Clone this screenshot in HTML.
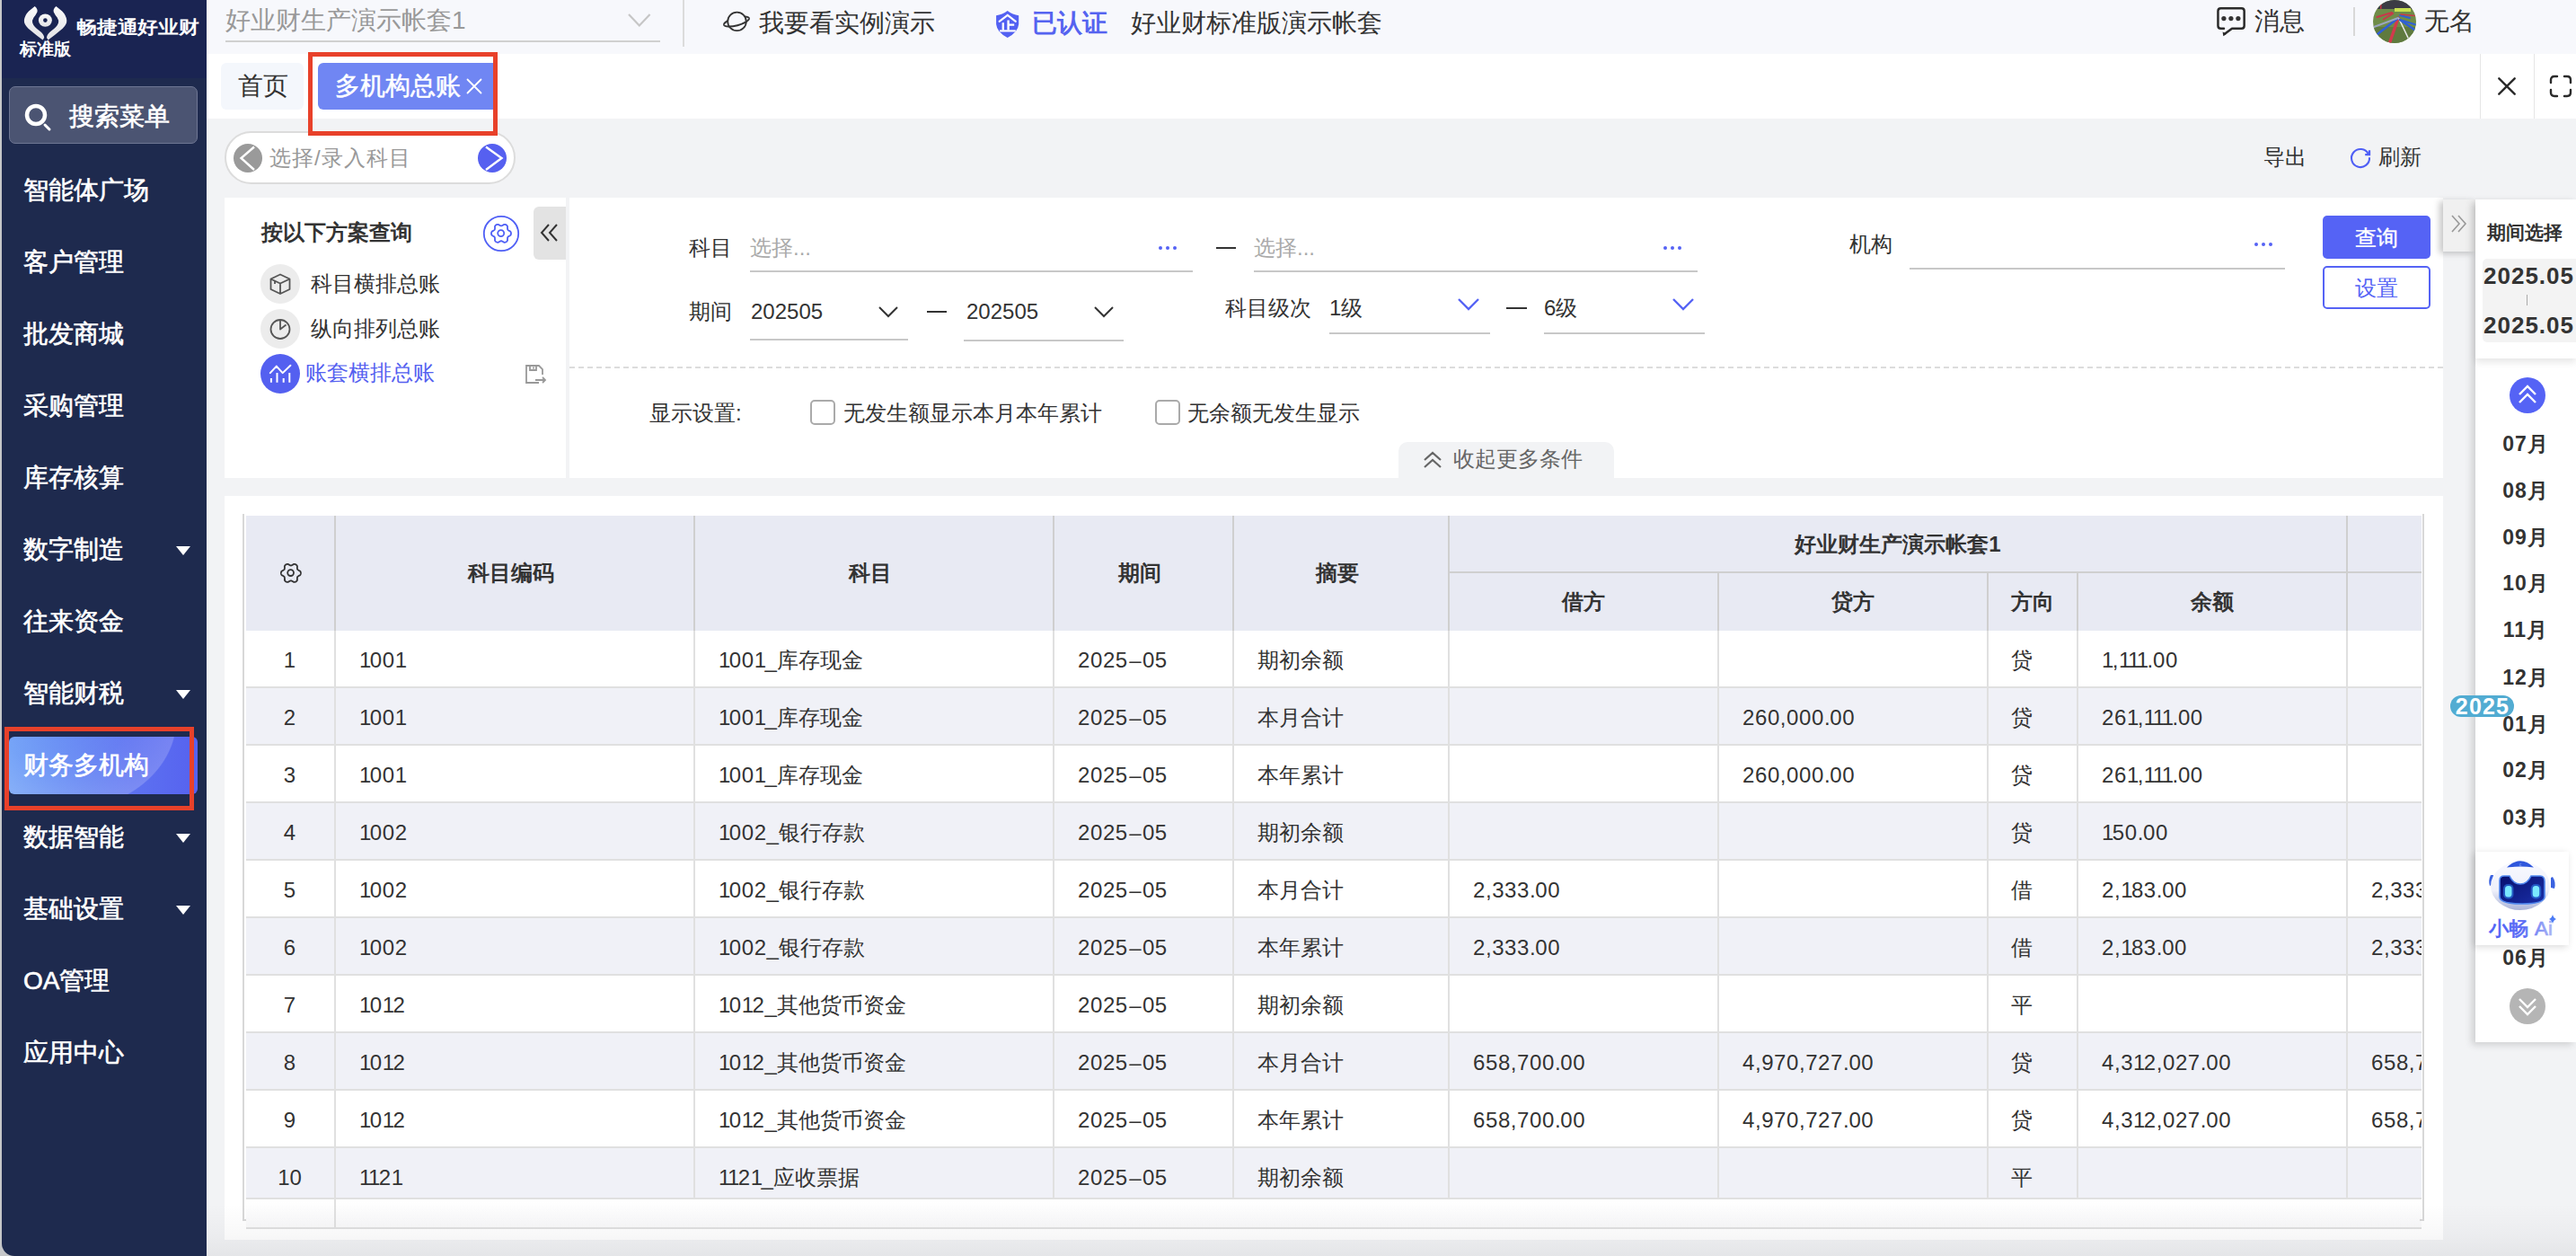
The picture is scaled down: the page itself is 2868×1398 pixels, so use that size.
<!DOCTYPE html><html><head><meta charset="utf-8"><title>多机构总账</title><style>
*{box-sizing:border-box;margin:0;padding:0}
html,body{width:2868px;height:1398px;overflow:hidden}
body{position:relative;background:#f2f3f5;font-family:"Liberation Sans",sans-serif;color:#333}
.a{position:absolute;white-space:nowrap}
.sb{top:0;height:1398px;background:#1e2a4e}
.mi{left:26px;font-size:28px;color:#fff;line-height:32px;-webkit-text-stroke:0.6px #fff}
.tri{width:0;height:0;border-left:8px solid transparent;border-right:8px solid transparent;border-top:10px solid #fff}
.f24{font-size:24px;line-height:28px}
.lbl{font-size:24px;line-height:28px;color:#333}
.ul{height:2px;background:#c8c8c8}
.dots{}
table.t{position:absolute;border-collapse:collapse;table-layout:fixed}
</style></head><body>
<div class="a" style="left:0;top:0;width:30px;height:1398px;background:#c6c7c9"></div>
<div class="a sb" style="left:2px;width:228px;border-bottom-left-radius:14px"></div>
<div class="a" style="left:2px;top:0;width:228px;height:87px;background:#1a2452"></div>
<svg class="a" style="left:20px;top:2px" width="62" height="48" viewBox="0 0 62 48">
<defs><linearGradient id="lg1" x1="0" y1="0" x2="0" y2="1"><stop offset="0" stop-color="#fafafa"/><stop offset="1" stop-color="#e2e2e6"/></linearGradient></defs>
<path id="wingL" d="M18.7 5 Q22.5 8 21.4 11.5 Q20 14.5 17.5 17.5 Q15.5 20.5 16.2 23.5 Q17.5 27.5 23 31.5 Q29.2 36 29.2 40 L27.6 42.6 Q20 37 11.5 29.8 Q6.5 25 6.9 20.6 Q7.5 15 12 10.5 Z" fill="url(#lg1)"/>
<path d="M42.5 5 Q38.7 8 39.8 11.5 Q41.2 14.5 43.7 17.5 Q45.7 20.5 45 23.5 Q43.7 27.5 38.2 31.5 Q32 36 32 40 L33.6 42.6 Q41.2 37 49.7 29.8 Q54.7 25 54.3 20.6 Q53.7 15 49.2 10.5 Z" fill="url(#lg1)"/>
<ellipse cx="30.4" cy="20.6" rx="7.5" ry="7.2" fill="url(#lg1)"/><circle cx="30.4" cy="20.6" r="2.3" fill="#1a2452"/>
</svg>
<div class="a" style="left:85px;top:18px;font-size:20px;line-height:24px;color:#fff;font-weight:bold;transform:scaleX(1.14);transform-origin:0 0">畅捷通好业财</div>
<div class="a" style="left:22px;top:43px;font-size:19px;line-height:24px;color:#fff;font-weight:bold">标准版</div>
<div class="a" style="left:10px;top:96px;width:210px;height:64px;background:#4b5472;border:1.5px solid #6e7693;border-radius:7px"></div>
<svg class="a" style="left:26px;top:114px" width="34" height="34" viewBox="0 0 34 34"><circle cx="14" cy="14" r="10" stroke="#fff" stroke-width="4.5" fill="none"/><path d="M24 25 L29 30" stroke="#fff" stroke-width="3" stroke-linecap="round"/></svg>
<div class="a" style="left:77px;top:112px;font-size:28px;line-height:36px;color:#fff;-webkit-text-stroke:0.6px #fff">搜索菜单</div>
<div class="a mi" style="top:196px">智能体广场</div>
<div class="a mi" style="top:276px">客户管理</div>
<div class="a mi" style="top:356px">批发商城</div>
<div class="a mi" style="top:436px">采购管理</div>
<div class="a mi" style="top:516px">库存核算</div>
<div class="a mi" style="top:596px">数字制造</div>
<div class="a tri" style="left:196px;top:608px"></div>
<div class="a mi" style="top:676px">往来资金</div>
<div class="a mi" style="top:756px">智能财税</div>
<div class="a tri" style="left:196px;top:768px"></div>
<div class="a" style="left:10px;top:820px;width:210px;height:64px;border-radius:6px;background:radial-gradient(ellipse 127px 103px at 60px -20px,rgba(255,255,255,0.0) 0%,rgba(255,255,255,0.05) 55%,rgba(255,255,255,0.19) 99%,rgba(255,255,255,0) 100%),linear-gradient(90deg,#6fa0f7 0%,#6689f4 35%,#5d72f1 65%,#5662ef 100%)"></div>
<div class="a mi" style="top:836px">财务多机构</div>
<div class="a mi" style="top:916px">数据智能</div>
<div class="a tri" style="left:196px;top:928px"></div>
<div class="a mi" style="top:996px">基础设置</div>
<div class="a tri" style="left:196px;top:1008px"></div>
<div class="a mi" style="top:1076px">OA管理</div>
<div class="a mi" style="top:1156px">应用中心</div>
<div class="a" style="left:230px;top:0;width:2638px;height:60px;background:#f7f8fc"></div>
<div class="a" style="left:251px;top:6px;font-size:28px;line-height:34px;color:#999">好业财生产演示帐套1</div>
<div class="a" style="left:251px;top:45px;width:484px;height:2px;background:#d0d0d0"></div>
<svg class="a" style="left:698px;top:13px" width="28" height="18" viewBox="0 0 28 18"><path d="M2 3 L13.8 15.5 L25.6 3" stroke="#c6c6c6" stroke-width="2.2" fill="none"/></svg>
<div class="a" style="left:760px;top:0;width:2px;height:52px;background:#dcdcdc"></div>
<svg class="a" style="left:804px;top:10px" width="32" height="28" viewBox="0 0 32 28"><path d="M2 17.75 A14.5 4.5 -15 0 1 30 10.25" stroke="#333" stroke-width="2" fill="none"/><circle cx="16.5" cy="13.9" r="10.3" stroke="#333" stroke-width="1.8" fill="#f7f8fc"/><path d="M30 10.25 A14.5 4.5 -15 0 1 2 17.75" stroke="#333" stroke-width="2" fill="none"/></svg>
<div class="a" style="left:845px;top:9px;font-size:28px;line-height:34px;color:#333">我要看实例演示</div>
<svg class="a" style="left:1100px;top:5px" width="44" height="44" viewBox="0 0 44 44"><path d="M21.7 7 Q16 11.3 9.1 12.2 L9.1 22 Q10 31 21.7 36.9 Q33.4 31 34.2 22 L34.2 12.2 Q27.4 11.3 21.7 7 Z" fill="#5361f2"/>
<path d="M12.6 18.8 L21.8 11.9 L30.8 18.8" stroke="#fff" stroke-width="2.1" fill="none" stroke-linecap="round"/><path d="M22.6 17.4 V28.6 M16.8 20.2 V28.6 M23.5 22.6 H29.2" stroke="#fff" stroke-width="2.4"/><path d="M13.1 29.4 H30.8" stroke="#fff" stroke-width="2.1"/></svg>
<div class="a" style="left:1149px;top:9px;font-size:28px;line-height:34px;color:#5563f0;font-weight:bold">已认证</div>
<div class="a" style="left:1259px;top:9px;font-size:28px;line-height:34px;color:#333">好业财标准版演示帐套</div>
<svg class="a" style="left:2460px;top:0" width="50" height="48" viewBox="0 0 50 48"><path d="M16 31.65 H12.45 Q9.45 31.65 9.45 28.65 V12.25 Q9.45 9.25 12.45 9.25 H35.65 Q38.65 9.25 38.65 12.25 V28.65 Q38.65 31.65 35.65 31.65 H25 L16.5 38" stroke="#2b2b2b" stroke-width="2.5" fill="none" stroke-linejoin="round" stroke-linecap="round"/><path d="M14.6 35.6 L15.3 40.2 L19.2 37.6 Z" fill="#2b2b2b"/><circle cx="15.9" cy="20.6" r="2.6" fill="#333"/><circle cx="23.9" cy="20.6" r="2.6" fill="#333"/><circle cx="31.9" cy="20.6" r="2.6" fill="#333"/></svg>
<div class="a" style="left:2510px;top:7px;font-size:28px;line-height:34px;color:#333">消息</div>
<div class="a" style="left:2620px;top:8px;width:2px;height:32px;background:#d8d8d8"></div>
<svg class="a" style="left:2642px;top:0" width="48" height="48" viewBox="0 0 48 48"><defs><clipPath id="avc"><circle cx="24" cy="24" r="24"/></clipPath></defs><g clip-path="url(#avc)">
<rect width="48" height="48" fill="#6f8c48"/><rect y="30" width="48" height="18" fill="#5f7a3e"/><rect width="48" height="10" fill="#3c3c44"/>
<rect x="24" y="9" width="18" height="4" fill="#c8e050"/><rect x="8" y="2" width="1.5" height="8" fill="#c03040"/>
<g stroke-linecap="round"><path d="M28 20 L18.8 47" stroke="#d23a4c" stroke-width="3.4"/><path d="M28 20 L5 38" stroke="#2f5fd6" stroke-width="2.6"/><path d="M28 20 L1 30" stroke="#9aa6bf" stroke-width="2"/>
<path d="M29 21 L39 42" stroke="#e8e8e8" stroke-width="1.6"/><path d="M30 22 L46 33" stroke="#2f5fd6" stroke-width="2.6"/><path d="M30 22 L47.5 27.5" stroke="#2f5fd6" stroke-width="2"/>
<path d="M30 17 L41 20" stroke="#2f5fd6" stroke-width="2"/><path d="M31 16 L46 17.5" stroke="#c8384a" stroke-width="1.6"/><path d="M21 14 L4.4 19" stroke="#c8384a" stroke-width="2"/><path d="M22.2 15 L11.8 21.5" stroke="#c8384a" stroke-width="2"/></g></g></svg>
<div class="a" style="left:2699px;top:7px;font-size:28px;line-height:34px;color:#333">无名</div>
<div class="a" style="left:230px;top:60px;width:2638px;height:72px;background:#fff"></div>
<div class="a" style="left:246px;top:70px;width:92px;height:52px;background:#f4f7fc;border-radius:6px"></div>
<div class="a" style="left:265px;top:79px;font-size:28px;line-height:34px;color:#333">首页</div>
<div class="a" style="left:354px;top:70px;width:196px;height:52px;background:#7086f3;border-radius:6px 0 0 6px"></div>
<div class="a" style="left:373px;top:79px;font-size:28px;line-height:34px;color:#fff;-webkit-text-stroke:0.5px #fff">多机构总账</div>
<svg class="a" style="left:519px;top:87px" width="18" height="18" viewBox="0 0 18 18"><path d="M1.5 1.5 L16.5 16.5 M16.5 1.5 L1.5 16.5" stroke="#fff" stroke-width="1.8" stroke-linecap="round"/></svg>
<div class="a" style="left:2761px;top:60px;width:1px;height:72px;background:#e6e6e6"></div>
<div class="a" style="left:2821px;top:60px;width:1px;height:72px;background:#e6e6e6"></div>
<svg class="a" style="left:2780px;top:85px" width="22" height="22" viewBox="0 0 22 22"><path d="M2.3 2.3 L19.7 19.7 M19.7 2.3 L2.3 19.7" stroke="#2b2b2b" stroke-width="2.4" stroke-linecap="round"/></svg>
<svg class="a" style="left:2838px;top:83px" width="26" height="26" viewBox="0 0 26 26"><path d="M2 9 V6 Q2 2 6 2 H9 M17 2 H20 Q24 2 24 6 V9 M24 17 V20 Q24 24 20 24 H17 M9 24 H6 Q2 24 2 20 V17" stroke="#2b2b2b" stroke-width="2.4" fill="none" stroke-linecap="round"/></svg>
<div class="a" style="left:250px;top:146px;width:324px;height:59px;background:#fff;border:2px solid #dcdcdc;border-radius:30px"></div>
<svg class="a" style="left:260px;top:160px" width="32" height="32" viewBox="0 0 32 32"><circle cx="16" cy="16" r="16" fill="#9a9a9a"/><path d="M23 3.5 L8.5 16 L23 29" stroke="#fff" stroke-width="2.4" fill="none"/></svg>
<div class="a" style="left:300px;top:162px;font-size:24px;line-height:28px;color:#999;letter-spacing:1px">选择/录入科目</div>
<svg class="a" style="left:532px;top:160px" width="32" height="32" viewBox="0 0 32 32"><circle cx="16" cy="16" r="16" fill="#5660f0"/><path d="M9 3.5 L26.5 16 L9 29" stroke="#fff" stroke-width="2.4" fill="none"/></svg>
<div class="a" style="left:2520px;top:161px;font-size:24px;line-height:28px;color:#333">导出</div>
<svg class="a" style="left:2608px;top:158px" width="40" height="36" viewBox="0 0 40 36"><path d="M30 17.3 A10 10 0 1 1 28.9 13.4" stroke="#4f5ff5" stroke-width="2.1" fill="none"/><path d="M30 9.3 V14.2 H25.2" stroke="#4f5ff5" stroke-width="2.3" fill="none"/></svg>
<div class="a" style="left:2648px;top:161px;font-size:24px;line-height:28px;color:#333">刷新</div>
<div class="a" style="left:250px;top:220px;width:380px;height:312px;background:#fff"></div>
<div class="a" style="left:291px;top:245px;font-size:24px;line-height:28px;color:#333;font-weight:bold">按以下方案查询</div>
<svg class="a" style="left:534px;top:236px" width="48" height="48" viewBox="0 0 48 48"><circle cx="24" cy="24" r="19.2" stroke="#4f5ff5" stroke-width="1.8" fill="none"/><path d="M35.00 23.80 L34.98 24.18 L34.92 24.56 L34.82 24.94 L34.68 25.30 L34.49 25.65 L34.24 25.98 L33.87 26.26 L33.26 26.45 L32.96 26.71 L32.62 26.94 L32.28 27.14 L31.96 27.34 L31.68 27.55 L31.45 27.76 L31.27 28.00 L31.15 28.27 L31.08 28.58 L31.05 28.92 L31.04 29.30 L31.03 29.70 L31.00 30.10 L30.93 30.49 L31.07 31.12 L31.00 31.58 L30.85 31.96 L30.64 32.30 L30.40 32.60 L30.12 32.88 L29.82 33.12 L29.50 33.33 L29.16 33.50 L28.80 33.64 L28.43 33.74 L28.04 33.80 L27.64 33.81 L27.23 33.75 L26.80 33.58 L26.33 33.14 L25.96 33.01 L25.59 32.83 L25.24 32.64 L24.91 32.47 L24.60 32.32 L24.29 32.23 L24.00 32.20 L23.71 32.23 L23.40 32.32 L23.09 32.47 L22.76 32.64 L22.41 32.83 L22.04 33.01 L21.67 33.14 L21.20 33.58 L20.77 33.75 L20.36 33.81 L19.96 33.80 L19.57 33.74 L19.20 33.64 L18.84 33.50 L18.50 33.33 L18.18 33.12 L17.88 32.88 L17.60 32.60 L17.36 32.30 L17.15 31.96 L17.00 31.58 L16.93 31.12 L17.07 30.49 L17.00 30.10 L16.97 29.70 L16.96 29.30 L16.95 28.92 L16.92 28.58 L16.85 28.27 L16.73 28.00 L16.55 27.76 L16.32 27.55 L16.04 27.34 L15.72 27.14 L15.38 26.94 L15.04 26.71 L14.74 26.45 L14.13 26.26 L13.76 25.98 L13.51 25.65 L13.32 25.30 L13.18 24.94 L13.08 24.56 L13.02 24.18 L13.00 23.80 L13.02 23.42 L13.08 23.04 L13.18 22.66 L13.32 22.30 L13.51 21.95 L13.76 21.62 L14.13 21.34 L14.74 21.15 L15.04 20.89 L15.38 20.66 L15.72 20.46 L16.04 20.26 L16.32 20.05 L16.55 19.84 L16.73 19.60 L16.85 19.33 L16.92 19.02 L16.95 18.68 L16.96 18.30 L16.97 17.90 L17.00 17.50 L17.07 17.11 L16.93 16.48 L17.00 16.02 L17.15 15.64 L17.36 15.30 L17.60 15.00 L17.88 14.72 L18.18 14.48 L18.50 14.27 L18.84 14.10 L19.20 13.96 L19.57 13.86 L19.96 13.80 L20.36 13.79 L20.77 13.85 L21.20 14.02 L21.67 14.46 L22.04 14.59 L22.41 14.77 L22.76 14.96 L23.09 15.13 L23.40 15.28 L23.71 15.37 L24.00 15.40 L24.29 15.37 L24.60 15.28 L24.91 15.13 L25.24 14.96 L25.59 14.77 L25.96 14.59 L26.33 14.46 L26.80 14.02 L27.23 13.85 L27.64 13.79 L28.04 13.80 L28.43 13.86 L28.80 13.96 L29.16 14.10 L29.50 14.27 L29.82 14.48 L30.12 14.72 L30.40 15.00 L30.64 15.30 L30.85 15.64 L31.00 16.02 L31.07 16.48 L30.93 17.11 L31.00 17.50 L31.03 17.90 L31.04 18.30 L31.05 18.68 L31.08 19.02 L31.15 19.33 L31.27 19.60 L31.45 19.84 L31.68 20.05 L31.96 20.26 L32.28 20.46 L32.62 20.66 L32.96 20.89 L33.26 21.15 L33.87 21.34 L34.24 21.62 L34.49 21.95 L34.68 22.30 L34.82 22.66 L34.92 23.04 L34.98 23.42Z" stroke="#4f5ff5" stroke-width="1.8" fill="none"/><circle cx="23.7" cy="23.6" r="3.5" stroke="#4f5ff5" stroke-width="1.8" fill="none"/></svg>
<div class="a" style="left:594px;top:230px;width:36px;height:59px;background:#e3e3e3;border-radius:6px 0 0 6px"></div>
<svg class="a" style="left:600px;top:247px" width="24" height="24" viewBox="0 0 24 24"><path d="M11 3 L3 12 L11 21 M20 3 L12 12 L20 21" stroke="#333" stroke-width="2" fill="none"/></svg>
<div class="a" style="left:290px;top:294px;width:44px;height:44px;border-radius:50%;background:#ececec"></div>
<svg class="a" style="left:299px;top:303px" width="26" height="26" viewBox="0 0 26 26"><path d="M13 2.5 L23.5 7.5 L23.5 19 L13 24 L2.5 19 L2.5 7.5 Z M2.5 7.5 L13 12.5 L23.5 7.5 M13 12.5 L13 24 M7 10 L7 13" stroke="#555" stroke-width="1.8" fill="none" stroke-linejoin="round"/></svg>
<div class="a" style="left:346px;top:302px;font-size:24px;line-height:28px;color:#333">科目横排总账</div>
<div class="a" style="left:290px;top:344px;width:44px;height:44px;border-radius:50%;background:#ececec"></div>
<svg class="a" style="left:299px;top:353px" width="26" height="26" viewBox="0 0 26 26"><circle cx="13" cy="13.5" r="10.5" stroke="#555" stroke-width="1.8" fill="none"/><path d="M13 3 L13 13.5 L19.5 8.5" stroke="#555" stroke-width="1.8" fill="none" stroke-linejoin="round"/></svg>
<div class="a" style="left:346px;top:352px;font-size:24px;line-height:28px;color:#333">纵向排列总账</div>
<div class="a" style="left:290px;top:394px;width:44px;height:44px;border-radius:50%;background:#5460f0"></div>
<svg class="a" style="left:290px;top:394px" width="44" height="44" viewBox="0 0 44 44"><path d="M10.8 21.1 L17.8 13.6 L24.7 21.1 L33.4 12.7" stroke="#fff" stroke-width="2" fill="none" stroke-linejoin="round" stroke-linecap="round"/><path d="M11.9 27 V31.7 M18.5 21 V31.7 M25.7 27 V31.7 M32.3 21 V31.7" stroke="#fff" stroke-width="2"/></svg>
<div class="a" style="left:340px;top:401px;font-size:24px;line-height:28px;color:#5460f0">账套横排总账</div>
<svg class="a" style="left:583px;top:404px" width="26" height="26" viewBox="0 0 26 26"><path d="M17 22 H3 V3 H17 L21 7 V13" stroke="#999" stroke-width="1.8" fill="none"/><path d="M7 3 V8 H14 V3 M11 4.5 V6.5" stroke="#999" stroke-width="1.8" fill="none"/><path d="M13 19 H24 M21 16 L24 19 L21 22" stroke="#999" stroke-width="1.8" fill="none"/></svg>
<div class="a" style="left:634px;top:220px;width:2086px;height:312px;background:#fff"></div>
<div class="a lbl" style="left:755px;width:60px;text-align:right;top:262px">科目</div>
<div class="a" style="left:835px;top:262px;font-size:24px;line-height:28px;color:#aaa">选择...</div>
<div class="a ul" style="left:835px;top:301px;width:493px"></div>
<svg class="a" style="left:1289px;top:273px" width="22" height="6" viewBox="0 0 22 6"><circle cx="3" cy="3" r="2" fill="#5562f5"/><circle cx="11" cy="3" r="2" fill="#5562f5"/><circle cx="19" cy="3" r="2" fill="#5562f5"/></svg>
<div class="a" style="left:1354px;top:275px;width:22px;height:2px;background:#333"></div>
<div class="a" style="left:1396px;top:262px;font-size:24px;line-height:28px;color:#aaa">选择...</div>
<div class="a ul" style="left:1396px;top:301px;width:494px"></div>
<svg class="a" style="left:1851px;top:273px" width="22" height="6" viewBox="0 0 22 6"><circle cx="3" cy="3" r="2" fill="#5562f5"/><circle cx="11" cy="3" r="2" fill="#5562f5"/><circle cx="19" cy="3" r="2" fill="#5562f5"/></svg>
<div class="a lbl" style="left:2047px;width:60px;text-align:right;top:258px">机构</div>
<div class="a ul" style="left:2126px;top:298px;width:418px"></div>
<svg class="a" style="left:2509px;top:269px" width="22" height="6" viewBox="0 0 22 6"><circle cx="3" cy="3" r="2" fill="#5562f5"/><circle cx="11" cy="3" r="2" fill="#5562f5"/><circle cx="19" cy="3" r="2" fill="#5562f5"/></svg>
<div class="a" style="left:2586px;top:240px;width:120px;height:48px;background:#5563f5;border-radius:5px;color:#fff;font-size:24px;line-height:50px;text-align:center;-webkit-text-stroke:0.4px #fff">查询</div>
<div class="a" style="left:2586px;top:296px;width:120px;height:48px;background:#fff;border:2px solid #5563f5;border-radius:5px;color:#5563f5;font-size:24px;line-height:46px;text-align:center">设置</div>
<div class="a lbl" style="left:755px;width:60px;text-align:right;top:333px">期间</div>
<div class="a" style="left:836px;top:333px;font-size:24px;line-height:28px;color:#333">202505</div>
<svg class="a" style="left:977px;top:340px" width="24" height="14" viewBox="0 0 24 14"><path d="M2 2 L12 12 L22 2" stroke="#333" stroke-width="2" fill="none"/></svg>
<div class="a ul" style="left:835px;top:377px;width:176px"></div>
<div class="a" style="left:1032px;top:346px;width:22px;height:2px;background:#333"></div>
<div class="a" style="left:1076px;top:333px;font-size:24px;line-height:28px;color:#333">202505</div>
<svg class="a" style="left:1217px;top:340px" width="24" height="14" viewBox="0 0 24 14"><path d="M2 2 L12 12 L22 2" stroke="#333" stroke-width="2" fill="none"/></svg>
<div class="a ul" style="left:1073px;top:378px;width:178px"></div>
<div class="a lbl" style="left:1360px;width:100px;text-align:right;top:329px">科目级次</div>
<div class="a" style="left:1480px;top:329px;font-size:24px;line-height:28px;color:#333">1级</div>
<svg class="a" style="left:1622px;top:331px" width="26" height="16" viewBox="0 0 26 16"><path d="M2 2 L13 13 L24 2" stroke="#5563f5" stroke-width="2.4" fill="none"/></svg>
<div class="a ul" style="left:1480px;top:370px;width:179px"></div>
<div class="a" style="left:1677px;top:342px;width:23px;height:2px;background:#333"></div>
<div class="a" style="left:1719px;top:329px;font-size:24px;line-height:28px;color:#333">6级</div>
<svg class="a" style="left:1861px;top:331px" width="26" height="16" viewBox="0 0 26 16"><path d="M2 2 L13 13 L24 2" stroke="#5563f5" stroke-width="2.4" fill="none"/></svg>
<div class="a ul" style="left:1719px;top:370px;width:179px"></div>
<div class="a" style="left:634px;top:408px;width:2086px;height:0;border-top:2px dashed #dcdcdc"></div>
<div class="a" style="left:723px;top:446px;font-size:24px;line-height:28px;color:#333">显示设置:</div>
<div class="a" style="left:902px;top:445px;width:28px;height:28px;border:2px solid #aaa;border-radius:5px;background:#fff"></div>
<div class="a" style="left:939px;top:446px;font-size:24px;line-height:28px;color:#333">无发生额显示本月本年累计</div>
<div class="a" style="left:1286px;top:445px;width:28px;height:28px;border:2px solid #aaa;border-radius:5px;background:#fff"></div>
<div class="a" style="left:1322px;top:446px;font-size:24px;line-height:28px;color:#333">无余额无发生显示</div>
<div class="a" style="left:1557px;top:492px;width:240px;height:40px;background:#f2f3f5;border-radius:10px 10px 0 0"></div>
<svg class="a" style="left:1583px;top:500px" width="24" height="24" viewBox="0 0 24 24"><path d="M3 12 L12 4 L21 12 M3 20 L12 12 L21 20" stroke="#666" stroke-width="2.2" fill="none"/></svg>
<div class="a" style="left:1618px;top:497px;font-size:24px;line-height:28px;color:#666">收起更多条件</div>
<div class="a" style="left:250px;top:552px;width:2470px;height:828px;background:#fff"></div>
<div class="a" style="left:274px;top:574px;width:2422px;height:128px;background:#e8eaf3"></div>
<div class="a" style="left:372px;top:574px;width:2px;height:128px;background:#cfcfcf"></div>
<div class="a" style="left:772px;top:574px;width:2px;height:128px;background:#cfcfcf"></div>
<div class="a" style="left:1172px;top:574px;width:2px;height:128px;background:#cfcfcf"></div>
<div class="a" style="left:1372px;top:574px;width:2px;height:128px;background:#cfcfcf"></div>
<div class="a" style="left:1612px;top:574px;width:2px;height:128px;background:#cfcfcf"></div>
<div class="a" style="left:1912px;top:637px;width:2px;height:65px;background:#cfcfcf"></div>
<div class="a" style="left:2212px;top:637px;width:2px;height:65px;background:#cfcfcf"></div>
<div class="a" style="left:2312px;top:637px;width:2px;height:65px;background:#cfcfcf"></div>
<div class="a" style="left:2612px;top:574px;width:2px;height:128px;background:#cfcfcf"></div>
<div class="a" style="left:1613px;top:636px;width:1083px;height:2px;background:#cfcfcf"></div>
<svg class="a" style="left:306px;top:620px" width="36" height="36" viewBox="0 0 36 36"><path d="M28.90 17.90 L28.88 18.28 L28.82 18.66 L28.72 19.04 L28.58 19.40 L28.39 19.75 L28.14 20.08 L27.77 20.36 L27.16 20.55 L26.86 20.81 L26.52 21.04 L26.18 21.24 L25.86 21.44 L25.58 21.65 L25.35 21.86 L25.17 22.10 L25.05 22.37 L24.98 22.68 L24.95 23.02 L24.94 23.40 L24.93 23.80 L24.90 24.20 L24.83 24.59 L24.97 25.22 L24.90 25.68 L24.75 26.06 L24.54 26.40 L24.30 26.70 L24.02 26.98 L23.72 27.22 L23.40 27.43 L23.06 27.60 L22.70 27.74 L22.33 27.84 L21.94 27.90 L21.54 27.91 L21.13 27.85 L20.70 27.68 L20.23 27.24 L19.86 27.11 L19.49 26.93 L19.14 26.74 L18.81 26.57 L18.50 26.42 L18.19 26.33 L17.90 26.30 L17.61 26.33 L17.30 26.42 L16.99 26.57 L16.66 26.74 L16.31 26.93 L15.94 27.11 L15.57 27.24 L15.10 27.68 L14.67 27.85 L14.26 27.91 L13.86 27.90 L13.47 27.84 L13.10 27.74 L12.74 27.60 L12.40 27.43 L12.08 27.22 L11.78 26.98 L11.50 26.70 L11.26 26.40 L11.05 26.06 L10.90 25.68 L10.83 25.22 L10.97 24.59 L10.90 24.20 L10.87 23.80 L10.86 23.40 L10.85 23.02 L10.82 22.68 L10.75 22.37 L10.63 22.10 L10.45 21.86 L10.22 21.65 L9.94 21.44 L9.62 21.24 L9.28 21.04 L8.94 20.81 L8.64 20.55 L8.03 20.36 L7.66 20.08 L7.41 19.75 L7.22 19.40 L7.08 19.04 L6.98 18.66 L6.92 18.28 L6.90 17.90 L6.92 17.52 L6.98 17.14 L7.08 16.76 L7.22 16.40 L7.41 16.05 L7.66 15.72 L8.03 15.44 L8.64 15.25 L8.94 14.99 L9.28 14.76 L9.62 14.56 L9.94 14.36 L10.22 14.15 L10.45 13.94 L10.63 13.70 L10.75 13.43 L10.82 13.12 L10.85 12.78 L10.86 12.40 L10.87 12.00 L10.90 11.60 L10.97 11.21 L10.83 10.58 L10.90 10.12 L11.05 9.74 L11.26 9.40 L11.50 9.10 L11.78 8.82 L12.08 8.58 L12.40 8.37 L12.74 8.20 L13.10 8.06 L13.47 7.96 L13.86 7.90 L14.26 7.89 L14.67 7.95 L15.10 8.12 L15.57 8.56 L15.94 8.69 L16.31 8.87 L16.66 9.06 L16.99 9.23 L17.30 9.38 L17.61 9.47 L17.90 9.50 L18.19 9.47 L18.50 9.38 L18.81 9.23 L19.14 9.06 L19.49 8.87 L19.86 8.69 L20.23 8.56 L20.70 8.12 L21.13 7.95 L21.54 7.89 L21.94 7.90 L22.33 7.96 L22.70 8.06 L23.06 8.20 L23.40 8.37 L23.72 8.58 L24.02 8.82 L24.30 9.10 L24.54 9.40 L24.75 9.74 L24.90 10.12 L24.97 10.58 L24.83 11.21 L24.90 11.60 L24.93 12.00 L24.94 12.40 L24.95 12.78 L24.98 13.12 L25.05 13.43 L25.17 13.70 L25.35 13.94 L25.58 14.15 L25.86 14.36 L26.18 14.56 L26.52 14.76 L26.86 14.99 L27.16 15.25 L27.77 15.44 L28.14 15.72 L28.39 16.05 L28.58 16.40 L28.72 16.76 L28.82 17.14 L28.88 17.52Z" stroke="#333" stroke-width="1.8" fill="none"/><circle cx="17.6" cy="17.6" r="3.4" stroke="#333" stroke-width="1.8" fill="none"/></svg>
<div class="a" style="left:369px;top:574px;width:400px;height:128px;display:flex;align-items:center;justify-content:center;font-size:24px;font-weight:bold;color:#333;">科目编码</div>
<div class="a" style="left:769px;top:574px;width:400px;height:128px;display:flex;align-items:center;justify-content:center;font-size:24px;font-weight:bold;color:#333;">科目</div>
<div class="a" style="left:1169px;top:574px;width:200px;height:128px;display:flex;align-items:center;justify-content:center;font-size:24px;font-weight:bold;color:#333;">期间</div>
<div class="a" style="left:1369px;top:574px;width:240px;height:128px;display:flex;align-items:center;justify-content:center;font-size:24px;font-weight:bold;color:#333;">摘要</div>
<div class="a" style="left:1613px;top:574px;width:1000px;height:63px;display:flex;align-items:center;justify-content:center;font-size:24px;font-weight:bold;color:#333;">好业财生产演示帐套1</div>
<div class="a" style="left:1613px;top:637px;width:300px;height:65px;display:flex;align-items:center;justify-content:center;font-size:24px;font-weight:bold;color:#333;">借方</div>
<div class="a" style="left:1913px;top:637px;width:300px;height:65px;display:flex;align-items:center;justify-content:center;font-size:24px;font-weight:bold;color:#333;">贷方</div>
<div class="a" style="left:2213px;top:637px;width:100px;height:65px;display:flex;align-items:center;justify-content:center;font-size:24px;font-weight:bold;color:#333;">方向</div>
<div class="a" style="left:2313px;top:637px;width:300px;height:65px;display:flex;align-items:center;justify-content:center;font-size:24px;font-weight:bold;color:#333;">余额</div>
<div class="a" style="left:274px;top:702px;width:2422px;height:632px;overflow:hidden">
<div style="position:absolute;left:0;top:0px;width:2422px;height:64px;background:#fff"></div>
<div style="position:absolute;left:0;top:62px;width:2422px;height:2px;background:#e0e0e0"></div>
<div style="position:absolute;left:-2px;top:2px;width:101px;height:62px;line-height:62px;text-align:center;font-size:24px;color:#333">1</div>
<div style="position:absolute;left:126px;top:2px;width:373px;height:62px;line-height:62px;font-size:24px;color:#333;overflow:hidden;white-space:nowrap"><span style="letter-spacing:-1.6px">1</span><span style="letter-spacing:0.6px">0</span><span style="letter-spacing:0.6px">0</span><span style="letter-spacing:-1.6px">1</span></div>
<div style="position:absolute;left:526px;top:2px;width:373px;height:62px;line-height:62px;font-size:24px;color:#333;overflow:hidden;white-space:nowrap"><span style="letter-spacing:-1.6px">1</span><span style="letter-spacing:0.6px">0</span><span style="letter-spacing:0.6px">0</span><span style="letter-spacing:-1.6px">1</span>_库存现金</div>
<div style="position:absolute;left:926px;top:2px;width:173px;height:62px;line-height:62px;font-size:24px;color:#333;overflow:hidden;white-space:nowrap"><span style="letter-spacing:0.6px">2</span><span style="letter-spacing:0.6px">0</span><span style="letter-spacing:0.6px">2</span><span style="letter-spacing:0.6px">5</span><span style="letter-spacing:1.2px;margin-left:1.5px">–</span><span style="letter-spacing:0.6px">0</span><span style="letter-spacing:0.6px">5</span></div>
<div style="position:absolute;left:1126px;top:2px;width:213px;height:62px;line-height:62px;font-size:24px;color:#333;overflow:hidden;white-space:nowrap">期初余额</div>
<div style="position:absolute;left:1965px;top:2px;width:74px;height:62px;line-height:62px;font-size:24px;color:#333;overflow:hidden;white-space:nowrap">贷</div>
<div style="position:absolute;left:2066px;top:2px;width:273px;height:62px;line-height:62px;font-size:24px;color:#333;overflow:hidden;white-space:nowrap"><span style="letter-spacing:-1.6px">1</span><span style="letter-spacing:0.5px">,</span><span style="letter-spacing:-1.6px">1</span><span style="letter-spacing:-1.6px">1</span><span style="letter-spacing:-1.6px">1</span><span style="letter-spacing:-0.3px">.</span><span style="letter-spacing:0.6px">0</span><span style="letter-spacing:0.6px">0</span></div>
<div style="position:absolute;left:0;top:64px;width:2422px;height:64px;background:#f0f1f7"></div>
<div style="position:absolute;left:0;top:126px;width:2422px;height:2px;background:#e0e0e0"></div>
<div style="position:absolute;left:-2px;top:66px;width:101px;height:62px;line-height:62px;text-align:center;font-size:24px;color:#333">2</div>
<div style="position:absolute;left:126px;top:66px;width:373px;height:62px;line-height:62px;font-size:24px;color:#333;overflow:hidden;white-space:nowrap"><span style="letter-spacing:-1.6px">1</span><span style="letter-spacing:0.6px">0</span><span style="letter-spacing:0.6px">0</span><span style="letter-spacing:-1.6px">1</span></div>
<div style="position:absolute;left:526px;top:66px;width:373px;height:62px;line-height:62px;font-size:24px;color:#333;overflow:hidden;white-space:nowrap"><span style="letter-spacing:-1.6px">1</span><span style="letter-spacing:0.6px">0</span><span style="letter-spacing:0.6px">0</span><span style="letter-spacing:-1.6px">1</span>_库存现金</div>
<div style="position:absolute;left:926px;top:66px;width:173px;height:62px;line-height:62px;font-size:24px;color:#333;overflow:hidden;white-space:nowrap"><span style="letter-spacing:0.6px">2</span><span style="letter-spacing:0.6px">0</span><span style="letter-spacing:0.6px">2</span><span style="letter-spacing:0.6px">5</span><span style="letter-spacing:1.2px;margin-left:1.5px">–</span><span style="letter-spacing:0.6px">0</span><span style="letter-spacing:0.6px">5</span></div>
<div style="position:absolute;left:1126px;top:66px;width:213px;height:62px;line-height:62px;font-size:24px;color:#333;overflow:hidden;white-space:nowrap">本月合计</div>
<div style="position:absolute;left:1666px;top:66px;width:273px;height:62px;line-height:62px;font-size:24px;color:#333;overflow:hidden;white-space:nowrap"><span style="letter-spacing:0.6px">2</span><span style="letter-spacing:0.6px">6</span><span style="letter-spacing:0.6px">0</span><span style="letter-spacing:0.5px">,</span><span style="letter-spacing:0.6px">0</span><span style="letter-spacing:0.6px">0</span><span style="letter-spacing:0.6px">0</span><span style="letter-spacing:-0.3px">.</span><span style="letter-spacing:0.6px">0</span><span style="letter-spacing:0.6px">0</span></div>
<div style="position:absolute;left:1965px;top:66px;width:74px;height:62px;line-height:62px;font-size:24px;color:#333;overflow:hidden;white-space:nowrap">贷</div>
<div style="position:absolute;left:2066px;top:66px;width:273px;height:62px;line-height:62px;font-size:24px;color:#333;overflow:hidden;white-space:nowrap"><span style="letter-spacing:0.6px">2</span><span style="letter-spacing:0.6px">6</span><span style="letter-spacing:-1.6px">1</span><span style="letter-spacing:0.5px">,</span><span style="letter-spacing:-1.6px">1</span><span style="letter-spacing:-1.6px">1</span><span style="letter-spacing:-1.6px">1</span><span style="letter-spacing:-0.3px">.</span><span style="letter-spacing:0.6px">0</span><span style="letter-spacing:0.6px">0</span></div>
<div style="position:absolute;left:0;top:128px;width:2422px;height:64px;background:#fff"></div>
<div style="position:absolute;left:0;top:190px;width:2422px;height:2px;background:#e0e0e0"></div>
<div style="position:absolute;left:-2px;top:130px;width:101px;height:62px;line-height:62px;text-align:center;font-size:24px;color:#333">3</div>
<div style="position:absolute;left:126px;top:130px;width:373px;height:62px;line-height:62px;font-size:24px;color:#333;overflow:hidden;white-space:nowrap"><span style="letter-spacing:-1.6px">1</span><span style="letter-spacing:0.6px">0</span><span style="letter-spacing:0.6px">0</span><span style="letter-spacing:-1.6px">1</span></div>
<div style="position:absolute;left:526px;top:130px;width:373px;height:62px;line-height:62px;font-size:24px;color:#333;overflow:hidden;white-space:nowrap"><span style="letter-spacing:-1.6px">1</span><span style="letter-spacing:0.6px">0</span><span style="letter-spacing:0.6px">0</span><span style="letter-spacing:-1.6px">1</span>_库存现金</div>
<div style="position:absolute;left:926px;top:130px;width:173px;height:62px;line-height:62px;font-size:24px;color:#333;overflow:hidden;white-space:nowrap"><span style="letter-spacing:0.6px">2</span><span style="letter-spacing:0.6px">0</span><span style="letter-spacing:0.6px">2</span><span style="letter-spacing:0.6px">5</span><span style="letter-spacing:1.2px;margin-left:1.5px">–</span><span style="letter-spacing:0.6px">0</span><span style="letter-spacing:0.6px">5</span></div>
<div style="position:absolute;left:1126px;top:130px;width:213px;height:62px;line-height:62px;font-size:24px;color:#333;overflow:hidden;white-space:nowrap">本年累计</div>
<div style="position:absolute;left:1666px;top:130px;width:273px;height:62px;line-height:62px;font-size:24px;color:#333;overflow:hidden;white-space:nowrap"><span style="letter-spacing:0.6px">2</span><span style="letter-spacing:0.6px">6</span><span style="letter-spacing:0.6px">0</span><span style="letter-spacing:0.5px">,</span><span style="letter-spacing:0.6px">0</span><span style="letter-spacing:0.6px">0</span><span style="letter-spacing:0.6px">0</span><span style="letter-spacing:-0.3px">.</span><span style="letter-spacing:0.6px">0</span><span style="letter-spacing:0.6px">0</span></div>
<div style="position:absolute;left:1965px;top:130px;width:74px;height:62px;line-height:62px;font-size:24px;color:#333;overflow:hidden;white-space:nowrap">贷</div>
<div style="position:absolute;left:2066px;top:130px;width:273px;height:62px;line-height:62px;font-size:24px;color:#333;overflow:hidden;white-space:nowrap"><span style="letter-spacing:0.6px">2</span><span style="letter-spacing:0.6px">6</span><span style="letter-spacing:-1.6px">1</span><span style="letter-spacing:0.5px">,</span><span style="letter-spacing:-1.6px">1</span><span style="letter-spacing:-1.6px">1</span><span style="letter-spacing:-1.6px">1</span><span style="letter-spacing:-0.3px">.</span><span style="letter-spacing:0.6px">0</span><span style="letter-spacing:0.6px">0</span></div>
<div style="position:absolute;left:0;top:192px;width:2422px;height:64px;background:#f0f1f7"></div>
<div style="position:absolute;left:0;top:254px;width:2422px;height:2px;background:#e0e0e0"></div>
<div style="position:absolute;left:-2px;top:194px;width:101px;height:62px;line-height:62px;text-align:center;font-size:24px;color:#333">4</div>
<div style="position:absolute;left:126px;top:194px;width:373px;height:62px;line-height:62px;font-size:24px;color:#333;overflow:hidden;white-space:nowrap"><span style="letter-spacing:-1.6px">1</span><span style="letter-spacing:0.6px">0</span><span style="letter-spacing:0.6px">0</span><span style="letter-spacing:0.6px">2</span></div>
<div style="position:absolute;left:526px;top:194px;width:373px;height:62px;line-height:62px;font-size:24px;color:#333;overflow:hidden;white-space:nowrap"><span style="letter-spacing:-1.6px">1</span><span style="letter-spacing:0.6px">0</span><span style="letter-spacing:0.6px">0</span><span style="letter-spacing:0.6px">2</span>_银行存款</div>
<div style="position:absolute;left:926px;top:194px;width:173px;height:62px;line-height:62px;font-size:24px;color:#333;overflow:hidden;white-space:nowrap"><span style="letter-spacing:0.6px">2</span><span style="letter-spacing:0.6px">0</span><span style="letter-spacing:0.6px">2</span><span style="letter-spacing:0.6px">5</span><span style="letter-spacing:1.2px;margin-left:1.5px">–</span><span style="letter-spacing:0.6px">0</span><span style="letter-spacing:0.6px">5</span></div>
<div style="position:absolute;left:1126px;top:194px;width:213px;height:62px;line-height:62px;font-size:24px;color:#333;overflow:hidden;white-space:nowrap">期初余额</div>
<div style="position:absolute;left:1965px;top:194px;width:74px;height:62px;line-height:62px;font-size:24px;color:#333;overflow:hidden;white-space:nowrap">贷</div>
<div style="position:absolute;left:2066px;top:194px;width:273px;height:62px;line-height:62px;font-size:24px;color:#333;overflow:hidden;white-space:nowrap"><span style="letter-spacing:-1.6px">1</span><span style="letter-spacing:0.6px">5</span><span style="letter-spacing:0.6px">0</span><span style="letter-spacing:-0.3px">.</span><span style="letter-spacing:0.6px">0</span><span style="letter-spacing:0.6px">0</span></div>
<div style="position:absolute;left:0;top:256px;width:2422px;height:64px;background:#fff"></div>
<div style="position:absolute;left:0;top:318px;width:2422px;height:2px;background:#e0e0e0"></div>
<div style="position:absolute;left:-2px;top:258px;width:101px;height:62px;line-height:62px;text-align:center;font-size:24px;color:#333">5</div>
<div style="position:absolute;left:126px;top:258px;width:373px;height:62px;line-height:62px;font-size:24px;color:#333;overflow:hidden;white-space:nowrap"><span style="letter-spacing:-1.6px">1</span><span style="letter-spacing:0.6px">0</span><span style="letter-spacing:0.6px">0</span><span style="letter-spacing:0.6px">2</span></div>
<div style="position:absolute;left:526px;top:258px;width:373px;height:62px;line-height:62px;font-size:24px;color:#333;overflow:hidden;white-space:nowrap"><span style="letter-spacing:-1.6px">1</span><span style="letter-spacing:0.6px">0</span><span style="letter-spacing:0.6px">0</span><span style="letter-spacing:0.6px">2</span>_银行存款</div>
<div style="position:absolute;left:926px;top:258px;width:173px;height:62px;line-height:62px;font-size:24px;color:#333;overflow:hidden;white-space:nowrap"><span style="letter-spacing:0.6px">2</span><span style="letter-spacing:0.6px">0</span><span style="letter-spacing:0.6px">2</span><span style="letter-spacing:0.6px">5</span><span style="letter-spacing:1.2px;margin-left:1.5px">–</span><span style="letter-spacing:0.6px">0</span><span style="letter-spacing:0.6px">5</span></div>
<div style="position:absolute;left:1126px;top:258px;width:213px;height:62px;line-height:62px;font-size:24px;color:#333;overflow:hidden;white-space:nowrap">本月合计</div>
<div style="position:absolute;left:1366px;top:258px;width:273px;height:62px;line-height:62px;font-size:24px;color:#333;overflow:hidden;white-space:nowrap"><span style="letter-spacing:0.6px">2</span><span style="letter-spacing:0.5px">,</span><span style="letter-spacing:0.6px">3</span><span style="letter-spacing:0.6px">3</span><span style="letter-spacing:0.6px">3</span><span style="letter-spacing:-0.3px">.</span><span style="letter-spacing:0.6px">0</span><span style="letter-spacing:0.6px">0</span></div>
<div style="position:absolute;left:1965px;top:258px;width:74px;height:62px;line-height:62px;font-size:24px;color:#333;overflow:hidden;white-space:nowrap">借</div>
<div style="position:absolute;left:2066px;top:258px;width:273px;height:62px;line-height:62px;font-size:24px;color:#333;overflow:hidden;white-space:nowrap"><span style="letter-spacing:0.6px">2</span><span style="letter-spacing:0.5px">,</span><span style="letter-spacing:-1.6px">1</span><span style="letter-spacing:0.6px">8</span><span style="letter-spacing:0.6px">3</span><span style="letter-spacing:-0.3px">.</span><span style="letter-spacing:0.6px">0</span><span style="letter-spacing:0.6px">0</span></div>
<div style="position:absolute;left:2366px;top:258px;width:57px;height:62px;line-height:62px;font-size:24px;color:#333;overflow:hidden;white-space:nowrap"><span style="letter-spacing:0.6px">2</span><span style="letter-spacing:0.5px">,</span><span style="letter-spacing:0.6px">3</span><span style="letter-spacing:0.6px">3</span><span style="letter-spacing:0.6px">3</span><span style="letter-spacing:-0.3px">.</span><span style="letter-spacing:0.6px">0</span><span style="letter-spacing:0.6px">0</span></div>
<div style="position:absolute;left:0;top:320px;width:2422px;height:64px;background:#f0f1f7"></div>
<div style="position:absolute;left:0;top:382px;width:2422px;height:2px;background:#e0e0e0"></div>
<div style="position:absolute;left:-2px;top:322px;width:101px;height:62px;line-height:62px;text-align:center;font-size:24px;color:#333">6</div>
<div style="position:absolute;left:126px;top:322px;width:373px;height:62px;line-height:62px;font-size:24px;color:#333;overflow:hidden;white-space:nowrap"><span style="letter-spacing:-1.6px">1</span><span style="letter-spacing:0.6px">0</span><span style="letter-spacing:0.6px">0</span><span style="letter-spacing:0.6px">2</span></div>
<div style="position:absolute;left:526px;top:322px;width:373px;height:62px;line-height:62px;font-size:24px;color:#333;overflow:hidden;white-space:nowrap"><span style="letter-spacing:-1.6px">1</span><span style="letter-spacing:0.6px">0</span><span style="letter-spacing:0.6px">0</span><span style="letter-spacing:0.6px">2</span>_银行存款</div>
<div style="position:absolute;left:926px;top:322px;width:173px;height:62px;line-height:62px;font-size:24px;color:#333;overflow:hidden;white-space:nowrap"><span style="letter-spacing:0.6px">2</span><span style="letter-spacing:0.6px">0</span><span style="letter-spacing:0.6px">2</span><span style="letter-spacing:0.6px">5</span><span style="letter-spacing:1.2px;margin-left:1.5px">–</span><span style="letter-spacing:0.6px">0</span><span style="letter-spacing:0.6px">5</span></div>
<div style="position:absolute;left:1126px;top:322px;width:213px;height:62px;line-height:62px;font-size:24px;color:#333;overflow:hidden;white-space:nowrap">本年累计</div>
<div style="position:absolute;left:1366px;top:322px;width:273px;height:62px;line-height:62px;font-size:24px;color:#333;overflow:hidden;white-space:nowrap"><span style="letter-spacing:0.6px">2</span><span style="letter-spacing:0.5px">,</span><span style="letter-spacing:0.6px">3</span><span style="letter-spacing:0.6px">3</span><span style="letter-spacing:0.6px">3</span><span style="letter-spacing:-0.3px">.</span><span style="letter-spacing:0.6px">0</span><span style="letter-spacing:0.6px">0</span></div>
<div style="position:absolute;left:1965px;top:322px;width:74px;height:62px;line-height:62px;font-size:24px;color:#333;overflow:hidden;white-space:nowrap">借</div>
<div style="position:absolute;left:2066px;top:322px;width:273px;height:62px;line-height:62px;font-size:24px;color:#333;overflow:hidden;white-space:nowrap"><span style="letter-spacing:0.6px">2</span><span style="letter-spacing:0.5px">,</span><span style="letter-spacing:-1.6px">1</span><span style="letter-spacing:0.6px">8</span><span style="letter-spacing:0.6px">3</span><span style="letter-spacing:-0.3px">.</span><span style="letter-spacing:0.6px">0</span><span style="letter-spacing:0.6px">0</span></div>
<div style="position:absolute;left:2366px;top:322px;width:57px;height:62px;line-height:62px;font-size:24px;color:#333;overflow:hidden;white-space:nowrap"><span style="letter-spacing:0.6px">2</span><span style="letter-spacing:0.5px">,</span><span style="letter-spacing:0.6px">3</span><span style="letter-spacing:0.6px">3</span><span style="letter-spacing:0.6px">3</span><span style="letter-spacing:-0.3px">.</span><span style="letter-spacing:0.6px">0</span><span style="letter-spacing:0.6px">0</span></div>
<div style="position:absolute;left:0;top:384px;width:2422px;height:64px;background:#fff"></div>
<div style="position:absolute;left:0;top:446px;width:2422px;height:2px;background:#e0e0e0"></div>
<div style="position:absolute;left:-2px;top:386px;width:101px;height:62px;line-height:62px;text-align:center;font-size:24px;color:#333">7</div>
<div style="position:absolute;left:126px;top:386px;width:373px;height:62px;line-height:62px;font-size:24px;color:#333;overflow:hidden;white-space:nowrap"><span style="letter-spacing:-1.6px">1</span><span style="letter-spacing:0.6px">0</span><span style="letter-spacing:-1.6px">1</span><span style="letter-spacing:0.6px">2</span></div>
<div style="position:absolute;left:526px;top:386px;width:373px;height:62px;line-height:62px;font-size:24px;color:#333;overflow:hidden;white-space:nowrap"><span style="letter-spacing:-1.6px">1</span><span style="letter-spacing:0.6px">0</span><span style="letter-spacing:-1.6px">1</span><span style="letter-spacing:0.6px">2</span>_其他货币资金</div>
<div style="position:absolute;left:926px;top:386px;width:173px;height:62px;line-height:62px;font-size:24px;color:#333;overflow:hidden;white-space:nowrap"><span style="letter-spacing:0.6px">2</span><span style="letter-spacing:0.6px">0</span><span style="letter-spacing:0.6px">2</span><span style="letter-spacing:0.6px">5</span><span style="letter-spacing:1.2px;margin-left:1.5px">–</span><span style="letter-spacing:0.6px">0</span><span style="letter-spacing:0.6px">5</span></div>
<div style="position:absolute;left:1126px;top:386px;width:213px;height:62px;line-height:62px;font-size:24px;color:#333;overflow:hidden;white-space:nowrap">期初余额</div>
<div style="position:absolute;left:1965px;top:386px;width:74px;height:62px;line-height:62px;font-size:24px;color:#333;overflow:hidden;white-space:nowrap">平</div>
<div style="position:absolute;left:0;top:448px;width:2422px;height:64px;background:#f0f1f7"></div>
<div style="position:absolute;left:0;top:510px;width:2422px;height:2px;background:#e0e0e0"></div>
<div style="position:absolute;left:-2px;top:450px;width:101px;height:62px;line-height:62px;text-align:center;font-size:24px;color:#333">8</div>
<div style="position:absolute;left:126px;top:450px;width:373px;height:62px;line-height:62px;font-size:24px;color:#333;overflow:hidden;white-space:nowrap"><span style="letter-spacing:-1.6px">1</span><span style="letter-spacing:0.6px">0</span><span style="letter-spacing:-1.6px">1</span><span style="letter-spacing:0.6px">2</span></div>
<div style="position:absolute;left:526px;top:450px;width:373px;height:62px;line-height:62px;font-size:24px;color:#333;overflow:hidden;white-space:nowrap"><span style="letter-spacing:-1.6px">1</span><span style="letter-spacing:0.6px">0</span><span style="letter-spacing:-1.6px">1</span><span style="letter-spacing:0.6px">2</span>_其他货币资金</div>
<div style="position:absolute;left:926px;top:450px;width:173px;height:62px;line-height:62px;font-size:24px;color:#333;overflow:hidden;white-space:nowrap"><span style="letter-spacing:0.6px">2</span><span style="letter-spacing:0.6px">0</span><span style="letter-spacing:0.6px">2</span><span style="letter-spacing:0.6px">5</span><span style="letter-spacing:1.2px;margin-left:1.5px">–</span><span style="letter-spacing:0.6px">0</span><span style="letter-spacing:0.6px">5</span></div>
<div style="position:absolute;left:1126px;top:450px;width:213px;height:62px;line-height:62px;font-size:24px;color:#333;overflow:hidden;white-space:nowrap">本月合计</div>
<div style="position:absolute;left:1366px;top:450px;width:273px;height:62px;line-height:62px;font-size:24px;color:#333;overflow:hidden;white-space:nowrap"><span style="letter-spacing:0.6px">6</span><span style="letter-spacing:0.6px">5</span><span style="letter-spacing:0.6px">8</span><span style="letter-spacing:0.5px">,</span><span style="letter-spacing:0.6px">7</span><span style="letter-spacing:0.6px">0</span><span style="letter-spacing:0.6px">0</span><span style="letter-spacing:-0.3px">.</span><span style="letter-spacing:0.6px">0</span><span style="letter-spacing:0.6px">0</span></div>
<div style="position:absolute;left:1666px;top:450px;width:273px;height:62px;line-height:62px;font-size:24px;color:#333;overflow:hidden;white-space:nowrap"><span style="letter-spacing:0.6px">4</span><span style="letter-spacing:0.5px">,</span><span style="letter-spacing:0.6px">9</span><span style="letter-spacing:0.6px">7</span><span style="letter-spacing:0.6px">0</span><span style="letter-spacing:0.5px">,</span><span style="letter-spacing:0.6px">7</span><span style="letter-spacing:0.6px">2</span><span style="letter-spacing:0.6px">7</span><span style="letter-spacing:-0.3px">.</span><span style="letter-spacing:0.6px">0</span><span style="letter-spacing:0.6px">0</span></div>
<div style="position:absolute;left:1965px;top:450px;width:74px;height:62px;line-height:62px;font-size:24px;color:#333;overflow:hidden;white-space:nowrap">贷</div>
<div style="position:absolute;left:2066px;top:450px;width:273px;height:62px;line-height:62px;font-size:24px;color:#333;overflow:hidden;white-space:nowrap"><span style="letter-spacing:0.6px">4</span><span style="letter-spacing:0.5px">,</span><span style="letter-spacing:0.6px">3</span><span style="letter-spacing:-1.6px">1</span><span style="letter-spacing:0.6px">2</span><span style="letter-spacing:0.5px">,</span><span style="letter-spacing:0.6px">0</span><span style="letter-spacing:0.6px">2</span><span style="letter-spacing:0.6px">7</span><span style="letter-spacing:-0.3px">.</span><span style="letter-spacing:0.6px">0</span><span style="letter-spacing:0.6px">0</span></div>
<div style="position:absolute;left:2366px;top:450px;width:57px;height:62px;line-height:62px;font-size:24px;color:#333;overflow:hidden;white-space:nowrap"><span style="letter-spacing:0.6px">6</span><span style="letter-spacing:0.6px">5</span><span style="letter-spacing:0.6px">8</span><span style="letter-spacing:0.5px">,</span><span style="letter-spacing:0.6px">7</span><span style="letter-spacing:0.6px">0</span><span style="letter-spacing:0.6px">0</span><span style="letter-spacing:-0.3px">.</span><span style="letter-spacing:0.6px">0</span><span style="letter-spacing:0.6px">0</span></div>
<div style="position:absolute;left:0;top:512px;width:2422px;height:64px;background:#fff"></div>
<div style="position:absolute;left:0;top:574px;width:2422px;height:2px;background:#e0e0e0"></div>
<div style="position:absolute;left:-2px;top:514px;width:101px;height:62px;line-height:62px;text-align:center;font-size:24px;color:#333">9</div>
<div style="position:absolute;left:126px;top:514px;width:373px;height:62px;line-height:62px;font-size:24px;color:#333;overflow:hidden;white-space:nowrap"><span style="letter-spacing:-1.6px">1</span><span style="letter-spacing:0.6px">0</span><span style="letter-spacing:-1.6px">1</span><span style="letter-spacing:0.6px">2</span></div>
<div style="position:absolute;left:526px;top:514px;width:373px;height:62px;line-height:62px;font-size:24px;color:#333;overflow:hidden;white-space:nowrap"><span style="letter-spacing:-1.6px">1</span><span style="letter-spacing:0.6px">0</span><span style="letter-spacing:-1.6px">1</span><span style="letter-spacing:0.6px">2</span>_其他货币资金</div>
<div style="position:absolute;left:926px;top:514px;width:173px;height:62px;line-height:62px;font-size:24px;color:#333;overflow:hidden;white-space:nowrap"><span style="letter-spacing:0.6px">2</span><span style="letter-spacing:0.6px">0</span><span style="letter-spacing:0.6px">2</span><span style="letter-spacing:0.6px">5</span><span style="letter-spacing:1.2px;margin-left:1.5px">–</span><span style="letter-spacing:0.6px">0</span><span style="letter-spacing:0.6px">5</span></div>
<div style="position:absolute;left:1126px;top:514px;width:213px;height:62px;line-height:62px;font-size:24px;color:#333;overflow:hidden;white-space:nowrap">本年累计</div>
<div style="position:absolute;left:1366px;top:514px;width:273px;height:62px;line-height:62px;font-size:24px;color:#333;overflow:hidden;white-space:nowrap"><span style="letter-spacing:0.6px">6</span><span style="letter-spacing:0.6px">5</span><span style="letter-spacing:0.6px">8</span><span style="letter-spacing:0.5px">,</span><span style="letter-spacing:0.6px">7</span><span style="letter-spacing:0.6px">0</span><span style="letter-spacing:0.6px">0</span><span style="letter-spacing:-0.3px">.</span><span style="letter-spacing:0.6px">0</span><span style="letter-spacing:0.6px">0</span></div>
<div style="position:absolute;left:1666px;top:514px;width:273px;height:62px;line-height:62px;font-size:24px;color:#333;overflow:hidden;white-space:nowrap"><span style="letter-spacing:0.6px">4</span><span style="letter-spacing:0.5px">,</span><span style="letter-spacing:0.6px">9</span><span style="letter-spacing:0.6px">7</span><span style="letter-spacing:0.6px">0</span><span style="letter-spacing:0.5px">,</span><span style="letter-spacing:0.6px">7</span><span style="letter-spacing:0.6px">2</span><span style="letter-spacing:0.6px">7</span><span style="letter-spacing:-0.3px">.</span><span style="letter-spacing:0.6px">0</span><span style="letter-spacing:0.6px">0</span></div>
<div style="position:absolute;left:1965px;top:514px;width:74px;height:62px;line-height:62px;font-size:24px;color:#333;overflow:hidden;white-space:nowrap">贷</div>
<div style="position:absolute;left:2066px;top:514px;width:273px;height:62px;line-height:62px;font-size:24px;color:#333;overflow:hidden;white-space:nowrap"><span style="letter-spacing:0.6px">4</span><span style="letter-spacing:0.5px">,</span><span style="letter-spacing:0.6px">3</span><span style="letter-spacing:-1.6px">1</span><span style="letter-spacing:0.6px">2</span><span style="letter-spacing:0.5px">,</span><span style="letter-spacing:0.6px">0</span><span style="letter-spacing:0.6px">2</span><span style="letter-spacing:0.6px">7</span><span style="letter-spacing:-0.3px">.</span><span style="letter-spacing:0.6px">0</span><span style="letter-spacing:0.6px">0</span></div>
<div style="position:absolute;left:2366px;top:514px;width:57px;height:62px;line-height:62px;font-size:24px;color:#333;overflow:hidden;white-space:nowrap"><span style="letter-spacing:0.6px">6</span><span style="letter-spacing:0.6px">5</span><span style="letter-spacing:0.6px">8</span><span style="letter-spacing:0.5px">,</span><span style="letter-spacing:0.6px">7</span><span style="letter-spacing:0.6px">0</span><span style="letter-spacing:0.6px">0</span><span style="letter-spacing:-0.3px">.</span><span style="letter-spacing:0.6px">0</span><span style="letter-spacing:0.6px">0</span></div>
<div style="position:absolute;left:0;top:576px;width:2422px;height:64px;background:#f0f1f7"></div>
<div style="position:absolute;left:0;top:638px;width:2422px;height:2px;background:#e0e0e0"></div>
<div style="position:absolute;left:-2px;top:578px;width:101px;height:62px;line-height:62px;text-align:center;font-size:24px;color:#333">10</div>
<div style="position:absolute;left:126px;top:578px;width:373px;height:62px;line-height:62px;font-size:24px;color:#333;overflow:hidden;white-space:nowrap"><span style="letter-spacing:-1.6px">1</span><span style="letter-spacing:-1.6px">1</span><span style="letter-spacing:0.6px">2</span><span style="letter-spacing:-1.6px">1</span></div>
<div style="position:absolute;left:526px;top:578px;width:373px;height:62px;line-height:62px;font-size:24px;color:#333;overflow:hidden;white-space:nowrap"><span style="letter-spacing:-1.6px">1</span><span style="letter-spacing:-1.6px">1</span><span style="letter-spacing:0.6px">2</span><span style="letter-spacing:-1.6px">1</span>_应收票据</div>
<div style="position:absolute;left:926px;top:578px;width:173px;height:62px;line-height:62px;font-size:24px;color:#333;overflow:hidden;white-space:nowrap"><span style="letter-spacing:0.6px">2</span><span style="letter-spacing:0.6px">0</span><span style="letter-spacing:0.6px">2</span><span style="letter-spacing:0.6px">5</span><span style="letter-spacing:1.2px;margin-left:1.5px">–</span><span style="letter-spacing:0.6px">0</span><span style="letter-spacing:0.6px">5</span></div>
<div style="position:absolute;left:1126px;top:578px;width:213px;height:62px;line-height:62px;font-size:24px;color:#333;overflow:hidden;white-space:nowrap">期初余额</div>
<div style="position:absolute;left:1965px;top:578px;width:74px;height:62px;line-height:62px;font-size:24px;color:#333;overflow:hidden;white-space:nowrap">平</div>
<div style="position:absolute;left:98px;top:0;width:2px;height:632px;background:#e0e0e0"></div>
<div style="position:absolute;left:498px;top:0;width:2px;height:632px;background:#e0e0e0"></div>
<div style="position:absolute;left:898px;top:0;width:2px;height:632px;background:#e0e0e0"></div>
<div style="position:absolute;left:1098px;top:0;width:2px;height:632px;background:#e0e0e0"></div>
<div style="position:absolute;left:1338px;top:0;width:2px;height:632px;background:#e0e0e0"></div>
<div style="position:absolute;left:1638px;top:0;width:2px;height:632px;background:#e0e0e0"></div>
<div style="position:absolute;left:1938px;top:0;width:2px;height:632px;background:#e0e0e0"></div>
<div style="position:absolute;left:2038px;top:0;width:2px;height:632px;background:#e0e0e0"></div>
<div style="position:absolute;left:2338px;top:0;width:2px;height:632px;background:#e0e0e0"></div>
</div>
<div class="a" style="left:274px;top:1333px;width:2422px;height:2px;background:#e0e0e0"></div>
<div class="a" style="left:274px;top:1335px;width:2422px;height:31px;background:linear-gradient(to bottom,#ffffff,#f9f9fa)"></div>
<div class="a" style="left:372px;top:1335px;width:2px;height:32px;background:#e0e0e0"></div>
<div class="a" style="left:274px;top:1366px;width:2422px;height:2px;background:#e0e0e0"></div>
<div class="a" style="left:270px;top:572px;width:2px;height:787px;background:#d8d8d8"></div>
<div class="a" style="left:270px;top:1357px;width:4px;height:2px;background:#d8d8d8"></div>
<div class="a" style="left:2697px;top:572px;width:2px;height:787px;background:#d8d8d8"></div>
<div class="a" style="left:2694px;top:1357px;width:5px;height:2px;background:#d8d8d8"></div>
<div class="a" style="left:2720px;top:222px;width:36px;height:58px;background:#f0f0f0;box-shadow:-4px 2px 7px rgba(0,0,0,0.22)"></div>
<svg class="a" style="left:2727px;top:237px" width="22" height="24" viewBox="0 0 22 24"><path d="M3 3 L11 12 L3 21 M10 3 L18 12 L10 21" stroke="#999" stroke-width="1.6" fill="none"/></svg>
<div class="a" style="left:2756px;top:222px;width:112px;height:938px;background:#fff;box-shadow:-4px 3px 8px rgba(0,0,0,0.15)"></div>
<div class="a" style="left:2756px;top:222px;width:112px;height:177px;background:#fff;box-shadow:0 4px 8px rgba(0,0,0,0.10)"></div>
<div class="a" style="left:2769px;top:245px;font-size:21px;line-height:28px;font-weight:bold;color:#333">期间选择</div>
<div class="a" style="left:2764px;top:288px;width:104px;height:93px;background:#f3f3f3;border-radius:5px 0 0 5px"></div>
<div class="a" style="left:2765px;top:292px;font-size:26px;line-height:30px;font-weight:bold;color:#333;letter-spacing:1px">2025.05</div>
<div class="a" style="left:2813px;top:328px;width:1px;height:12px;background:#aaa"></div>
<div class="a" style="left:2765px;top:347px;font-size:26px;line-height:30px;font-weight:bold;color:#333;letter-spacing:1px">2025.05</div>
<svg class="a" style="left:2794px;top:420px" width="40" height="40" viewBox="0 0 40 40"><circle cx="20" cy="20" r="20" fill="#5563f5"/><path d="M11 19 L20 10 L29 19 M11 28 L20 19 L29 28" stroke="#fff" stroke-width="2.4" fill="none"/></svg>
<div class="a" style="left:2756px;width:112px;text-align:center;top:480px;font-size:23px;line-height:28px;font-weight:bold;color:#333;letter-spacing:1px">07月</div>
<div class="a" style="left:2756px;width:112px;text-align:center;top:532px;font-size:23px;line-height:28px;font-weight:bold;color:#333;letter-spacing:1px">08月</div>
<div class="a" style="left:2756px;width:112px;text-align:center;top:584px;font-size:23px;line-height:28px;font-weight:bold;color:#333;letter-spacing:1px">09月</div>
<div class="a" style="left:2756px;width:112px;text-align:center;top:635px;font-size:23px;line-height:28px;font-weight:bold;color:#333;letter-spacing:1px">10月</div>
<div class="a" style="left:2756px;width:112px;text-align:center;top:687px;font-size:23px;line-height:28px;font-weight:bold;color:#333;letter-spacing:1px">11月</div>
<div class="a" style="left:2756px;width:112px;text-align:center;top:740px;font-size:23px;line-height:28px;font-weight:bold;color:#333;letter-spacing:1px">12月</div>
<div class="a" style="left:2756px;width:112px;text-align:center;top:792px;font-size:23px;line-height:28px;font-weight:bold;color:#333;letter-spacing:1px">01月</div>
<div class="a" style="left:2756px;width:112px;text-align:center;top:843px;font-size:23px;line-height:28px;font-weight:bold;color:#333;letter-spacing:1px">02月</div>
<div class="a" style="left:2756px;width:112px;text-align:center;top:896px;font-size:23px;line-height:28px;font-weight:bold;color:#333;letter-spacing:1px">03月</div>
<div class="a" style="left:2756px;width:112px;text-align:center;top:1052px;font-size:23px;line-height:28px;font-weight:bold;color:#333;letter-spacing:1px">06月</div>
<div class="a" style="left:2728px;top:774px;width:71px;height:24px;border-radius:12px;background:#52acd2;color:#fff;font-size:25px;line-height:24px;font-weight:bold;text-align:center;letter-spacing:1.2px;text-indent:1px">2025</div>
<div class="a" style="left:2756px;top:948px;width:104px;height:104px;background:#fff;box-shadow:-2px 2px 8px rgba(0,0,0,0.15)"></div>
<svg class="a" style="left:2756px;top:948px" width="104" height="104" viewBox="0 0 104 104">
<defs>
<linearGradient id="rhead" x1="0" y1="0" x2="0" y2="1"><stop offset="0" stop-color="#f8f9ff"/><stop offset="0.6" stop-color="#eef0fa"/><stop offset="1" stop-color="#aab3d8"/></linearGradient>
<linearGradient id="rvis" x1="0" y1="0" x2="1" y2="1"><stop offset="0" stop-color="#08106e"/><stop offset="1" stop-color="#1a2fa8"/></linearGradient>
<linearGradient id="rtxt" x1="0" y1="0" x2="1" y2="0"><stop offset="0" stop-color="#4a5ff5"/><stop offset="0.55" stop-color="#5a6cf5"/><stop offset="1" stop-color="#aab6f5"/></linearGradient>
</defs>
<path d="M17 26 Q14 32 16 38 L20 36 L20 26 Z" fill="#3a62e0"/>
<path d="M86 28 Q90 34 88 41 L84 40 L84 29 Z" fill="#3a62e0"/>
<ellipse cx="50" cy="38" rx="33" ry="27" fill="url(#rhead)"/>
<path d="M35 17.5 Q50 3 65 17.5 Q50 15.5 35 17.5 Z" fill="#2f57dc"/><text x="50" y="15.5" font-size="5" fill="#8fb0ff" text-anchor="middle" font-family="Liberation Sans, sans-serif">c</text>
<path d="M27 32 Q27 27 32 27 L38 27 Q42 36 50 36 Q58 36 62 27 L72 27 Q77 27 77 33 L77 50 Q77 58 52 58 Q27 58 27 50 Z" fill="url(#rvis)" stroke="#4f86ee" stroke-width="1.6"/>
<rect x="31" y="36" width="11.5" height="16.5" rx="5" fill="#2f7fe8" opacity="0.6"/><rect x="33" y="38" width="7.5" height="12.5" rx="3.5" fill="#7ae8ff"/>
<rect x="61.7" y="36" width="11.5" height="16.5" rx="5" fill="#2f7fe8" opacity="0.6"/><rect x="63.7" y="38" width="7.5" height="12.5" rx="3.5" fill="#7ae8ff"/>
<text x="15" y="93" font-family="Liberation Sans, sans-serif" font-size="22" fill="url(#rtxt)" stroke="url(#rtxt)" stroke-width="0.7" textLength="71" lengthAdjust="spacingAndGlyphs">小畅 Ai</text>
<path d="M86 70 Q87 74 90 75 Q87 76 86 80 Q85 76 82 75 Q85 74 86 70Z" fill="#4a7af5"/>
</svg>
<svg class="a" style="left:2794px;top:1100px" width="40" height="40" viewBox="0 0 40 40"><circle cx="20" cy="20" r="20" fill="#b5b5b5"/><path d="M11 12 L20 21 L29 12 M11 20 L20 29 L29 20" stroke="#fff" stroke-width="2.4" fill="none"/></svg>
<div class="a" style="left:230px;top:1340px;width:2638px;height:58px;background:linear-gradient(to bottom,rgba(60,60,70,0) 0%,rgba(60,60,70,0.035) 60%,rgba(60,60,70,0.075) 100%)"></div>
<div class="a" style="left:5px;top:809px;width:211px;height:93px;border:5px solid #e8412a"></div>
<div class="a" style="left:343px;top:58px;width:211px;height:93px;border:5px solid #e8412a"></div>
</body></html>
